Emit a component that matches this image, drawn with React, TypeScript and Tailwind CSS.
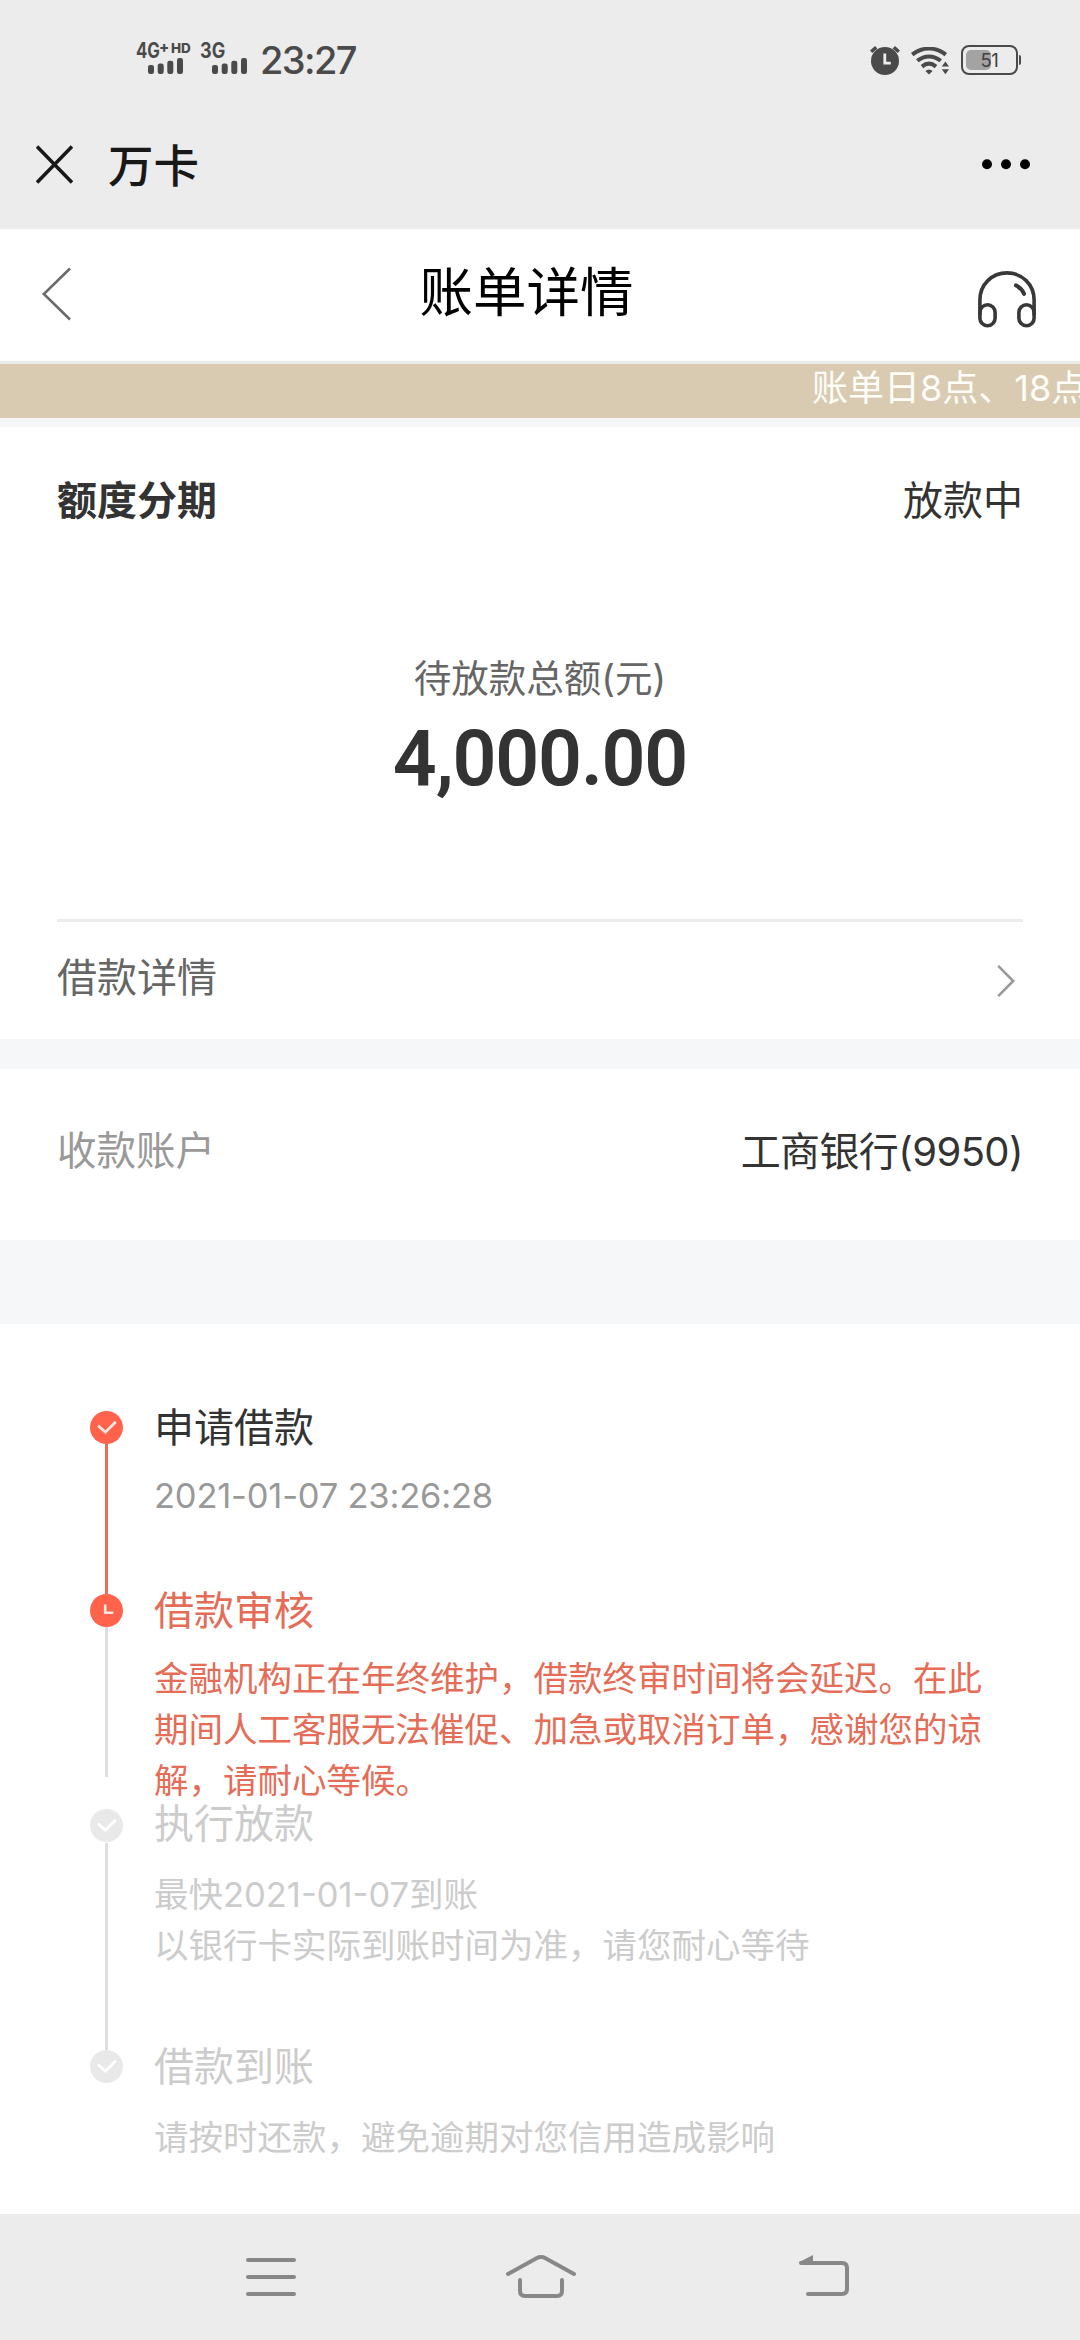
import clsx from "clsx";

type StepStatus = "done" | "current" | "pending";

interface Step {
  title: string;
  lines: string[];
  status: StepStatus;
  height: string;
  gap: string;
  connector?: string;
}

const STEPS: Step[] = [
  {
    title: "申请借款",
    lines: ["2021-01-07 23:26:28"],
    status: "done",
    height: "h-[183px]",
    gap: "mt-[26px]",
    connector: "h-[150px] bg-[#e2705c]",
  },
  {
    title: "借款审核",
    lines: [
      "金融机构正在年终维护，借款终审时间将会延迟。在此",
      "期间人工客服无法催促、加急或取消订单，感谢您的谅",
      "解，请耐心等候。",
    ],
    status: "current",
    height: "h-[213px]",
    gap: "mt-[26px]",
    connector: "h-[150px] bg-[#dfdfdf]",
  },
  {
    title: "执行放款",
    lines: ["最快2021-01-07到账", "以银行卡实际到账时间为准，请您耐心等待"],
    status: "pending",
    height: "h-[243px]",
    gap: "mt-[29px]",
    connector: "h-[207px] bg-[#dfdfdf]",
  },
  {
    title: "借款到账",
    lines: ["请按时还款，避免逾期对您信用造成影响"],
    status: "pending",
    height: "h-[164px]",
    gap: "mt-[29px]",
  },
];

const TITLE_COLORS: Record<StepStatus, string> = {
  done: "text-[#333333]",
  current: "text-[#e56c56]",
  pending: "text-[#cccccc]",
};

const LINE_COLORS: Record<StepStatus, string> = {
  done: "text-[#999999]",
  current: "text-[#e56c56]",
  pending: "text-[#cccccc]",
};

function SignalBars() {
  return (
    <svg width="35" height="16" viewBox="0 0 35 16" fill="#4a4a4a">
      <rect x="0" y="7" width="6" height="9" rx="2.2" />
      <rect x="9.7" y="5.6" width="6" height="10.4" rx="2.2" />
      <rect x="19.3" y="2.8" width="6" height="13.2" rx="2.2" />
      <rect x="29" y="0" width="6" height="16" rx="2.2" />
    </svg>
  );
}

function AlarmIcon() {
  return (
    <svg width="30" height="30" viewBox="0 0 30 30" fill="none">
      <circle cx="15" cy="16" r="14" fill="#4a4a4a" />
      <path d="M1.2 6.8 6.2 2.2M28.8 6.8 23.8 2.2" stroke="#4a4a4a" strokeWidth="3.4" />
      <path d="M14.8 8.5v9.6h6" stroke="#ececec" strokeWidth="2.8" />
    </svg>
  );
}

function WifiIcon() {
  return (
    <svg width="39" height="28" viewBox="0 0 39 28" fill="none">
      <g stroke="#4a4a4a" strokeWidth="4">
        <path d="M1.2 7.6C11.5 -.4 24.5 -.4 34.8 7.6" />
        <path d="M6.3 13.8C13.5 8 22.5 8 29.7 13.8" />
        <path d="M11 19.6C15.4 15.9 20.6 15.9 25 19.6" />
      </g>
      <path d="M14.4 24Q18 20.8 21.6 24L18 27.6Z" fill="#4a4a4a" />
      <path d="M34.4 14.6 38 19.6H30.8ZM30.8 22.3H38L34.4 27.3Z" fill="#4a4a4a" />
    </svg>
  );
}

function Battery() {
  return (
    <div className="flex items-center">
      <div className="relative flex h-[30px] w-[57px] rounded-[8px] border-2 border-[#4a4a4a] p-[3px]">
        <div className="h-5 w-[25px] rounded-[5px] bg-[#a3a3a3]" />
        <span className="absolute inset-0 flex items-center justify-center text-[18.5px] leading-none tracking-[-0.5px] text-[#404040]">
          51
        </span>
      </div>
      <div className="ml-px h-2.5 w-0.5 rounded-r-sm bg-[#4a4a4a]" />
    </div>
  );
}

function StatusBar() {
  return (
    <div className="flex h-[103px] items-start justify-between pl-[136px] pr-[59px] pt-[42px] text-[#4a4a4a]">
      <div className="flex">
        <div className="flex w-16 flex-col">
          <div className="flex h-4 items-start font-bold leading-4">
            <span className="w-[23px] origin-left scale-x-[0.8] text-[21px] leading-[18px]">4G</span>
            <span className="w-3 text-[15px] leading-[11px] font-extrabold">+</span>
            <span className="text-[13.5px] leading-[12px] font-extrabold">HD</span>
          </div>
          <div className="pl-3">
            <SignalBars />
          </div>
        </div>
        <div className="flex w-[60px] flex-col">
          <span className="h-4 origin-left scale-x-[0.86] text-[21px] font-bold leading-[18px]">3G</span>
          <div className="pl-3">
            <SignalBars />
          </div>
        </div>
        <span className="text-[38px] font-medium leading-[37px] tracking-[-1.6px]">23:27</span>
      </div>
      <div className="flex pt-[3px]">
        <div className="mr-[11px]">
          <AlarmIcon />
        </div>
        <div className="mr-[11px] pt-0.5">
          <WifiIcon />
        </div>
        <Battery />
      </div>
    </div>
  );
}

function AppBar() {
  return (
    <div className="flex h-[126px] items-start justify-between pl-9 pr-[50px]">
      <div className="flex items-start">
        <svg width="37" height="126" viewBox="0 0 37 126" fill="none">
          <path d="M1 43.5 36 79.5M36 43.5 1 79.5" stroke="#181818" strokeWidth="3.6" />
        </svg>
        <h1 className="ml-[35px] text-[45.5px] font-medium leading-[127px] text-[#181818]">万卡</h1>
      </div>
      <svg className="mt-14" width="48" height="11" viewBox="0 0 48 11" fill="#000">
        <circle cx="5" cy="5.3" r="5" />
        <circle cx="24" cy="5.3" r="5" />
        <circle cx="43" cy="5.3" r="5" />
      </svg>
    </div>
  );
}

function PageHeader() {
  return (
    <div className="flex h-[135px] items-start justify-between border-b-[3px] border-[#ebebeb] bg-white pl-[42px] pr-11">
      <svg className="mt-[38px]" width="29" height="54" viewBox="0 0 29 54" fill="none">
        <path d="M28 1.5 1.8 27 28 52.5" stroke="#6a6a6a" strokeWidth="2.6" />
      </svg>
      <h2 className="pl-1 text-[53.5px] leading-[127px] text-black">账单详情</h2>
      <svg className="mt-[42px]" width="58" height="57" viewBox="0 0 58 57" fill="none" stroke="#383838" strokeWidth="3.6">
        <path d="M1.9 44V29C1.9 13.5 14 1.9 29 1.9S56.1 13.5 56.1 29V44" />
        <rect x="1.9" y="33.8" width="15.2" height="21" rx="7.6" />
        <rect x="40.9" y="33.8" width="15.2" height="21" rx="7.6" />
        <path d="M38 14.4Q43.5 17 46 22.8" strokeWidth="4" strokeLinecap="round" />
      </svg>
    </div>
  );
}

function SummaryCard() {
  return (
    <section className="h-[612px] bg-white px-[57px] text-[40px]">
      <div className="flex justify-between pt-[44px] leading-[60px] text-[#333333]">
        <span className="font-bold">额度分期</span>
        <span>放款中</span>
      </div>
      <div className="flex h-[388px] flex-col items-center pt-[124px]">
        <span className="text-[37.5px] leading-[48px] text-[#666666]">待放款总额(元)</span>
        <span className="mt-[13px] font-[Roboto] text-[77px] font-semibold leading-[86px] tracking-[-1.2px] text-[#333333]">
          4,000.00
        </span>
      </div>
      <div className="flex items-center justify-between border-t-[3px] border-[#ebebeb] pr-2 leading-[112px] text-[#666666]">
        <span>借款详情</span>
        <svg className="mt-[5px]" width="18" height="34" viewBox="0 0 18 34" fill="none">
          <path d="M1.2 1.8 16.2 17 1.2 32.2" stroke="#999" strokeWidth="2.6" />
        </svg>
      </div>
    </section>
  );
}

function StepIcon({ status }: { status: StepStatus }) {
  const pending = status === "pending";
  return (
    <svg width="33" height="33" viewBox="0 0 33 33" fill="none" className="shrink-0">
      <circle cx="16.5" cy="16.5" r="16.5" fill={pending ? "#e9e9e9" : "#ff634c"} />
      {status === "current" ? (
        <path d="M15.2 10.5v8.3h8.2" stroke="#ffe5e0" strokeWidth="2.6" />
      ) : (
        <path d="m8 14.6 7.4 6.6 10.4-10.4" stroke={pending ? "#fff" : "#ffe5e0"} strokeWidth="2.8" />
      )}
    </svg>
  );
}

function Timeline() {
  return (
    <section className="h-[890px] bg-white pl-[90px] pt-[87px]">
      {STEPS.map((step, i) => (
        <div key={step.title} className={clsx("flex", step.height)}>
          <div className={clsx("flex w-[33px] flex-col items-center", i === 2 && "pt-[1.5px]")}>
            <StepIcon status={step.status} />
            {step.connector && <div className={clsx("w-[3px] shrink-0", step.connector, i === 2 && "mt-[1.5px]")} />}
          </div>
          <div className="ml-[31px]">
            <h3 className={clsx("text-[40px] leading-[33px]", TITLE_COLORS[step.status])}>{step.title}</h3>
            <div
              className={clsx(
                "whitespace-nowrap text-[34.5px] leading-[51px]",
                step.gap,
                LINE_COLORS[step.status],
              )}
            >
              {step.lines.map((line) => (
                <p key={line} className={clsx(line.startsWith("2021") && "tracking-[-0.2px]")}>
                  {line}
                </p>
              ))}
            </div>
          </div>
        </div>
      ))}
    </section>
  );
}

function NavBar() {
  return (
    <nav className="flex h-[126px] items-start bg-[#ececec] pl-[246px] pt-10 text-[#888888]">
      <svg width="50" height="46" viewBox="0 0 50 46" stroke="currentColor" strokeWidth="4" strokeLinecap="round">
        <path d="M2 6H48M2 23H48M2 40H48" />
      </svg>
      <svg className="ml-[210px]" width="70" height="46" viewBox="0 0 70 46" fill="none" stroke="currentColor" strokeWidth="4" strokeLinecap="round">
        <path d="M2 20 30.5 4.2Q35 1.8 39.5 4.2L68 20" />
        <path d="M14 26V37Q14 42 19 42H51Q56 42 56 37V26" />
      </svg>
      <svg className="ml-[222px]" width="52" height="46" viewBox="0 0 52 46" fill="none" stroke="currentColor" strokeWidth="4" strokeLinecap="round">
        <path d="M3 9H44Q49 9 49 14V35Q49 40 44 40H10" />
        <path d="M.5 8.5 15 1V9Z" fill="currentColor" stroke="none" />
      </svg>
    </nav>
  );
}

export default function App() {
  return (
    <div className="h-[2340px] w-[1080px] overflow-hidden bg-[#f6f7f9] font-[Inter,'Noto_Sans_CJK_SC',sans-serif]">
      <header className="bg-[#ececec]">
        <StatusBar />
        <AppBar />
      </header>
      <PageHeader />
      {/* Scrolling notice */}
      <div className="mb-[9px] h-[54px] overflow-hidden whitespace-nowrap bg-[#d9cbb1] pl-[812px] text-[36px] leading-[49px] text-[#fffdf8]">
        账单日8点、18点
      </div>
      <SummaryCard />
      <section className="mt-[30px] flex h-[171px] items-start justify-between bg-white px-[57px] text-[40px] leading-[165px]">
        <span className="text-[39.5px] text-[#999999]">收款账户</span>
        <span className="tracking-[-0.6px] text-[#333333]">工商银行(9950)</span>
      </section>
      <div className="h-[84px]" />
      <Timeline />
      <NavBar />
    </div>
  );
}
